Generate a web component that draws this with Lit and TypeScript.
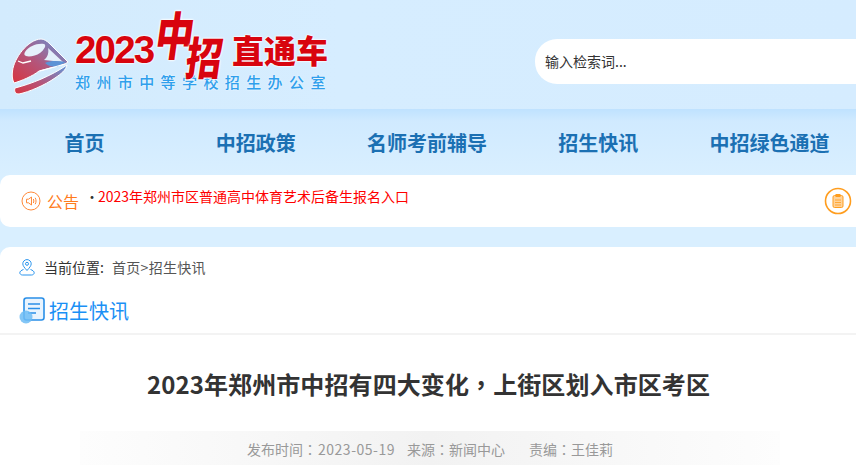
import { LitElement, html, css } from "lit";
import { customElement } from "lit/decorators.js";

const navItems = ["首页", "中招政策", "名师考前辅导", "招生快讯", "中招绿色通道"];

@customElement("app-root")
export class AppRoot extends LitElement {
  static styles = css`
    :host {
      display: block;
      width: 856px;
      height: 465px;
      overflow: hidden;
      background: #d9efff;
      font-family: "Noto Sans CJK SC", "Liberation Sans", sans-serif;
    }
    .header {
      height: 109px;
      display: flex;
      align-items: flex-start;
      justify-content: space-between;
      background: linear-gradient(90deg, #d3ebfd 0%, #d6edff 40%, #d5ecff 100%);
    }
    .logo {
      display: flex;
      padding: 8px 0 0 11px;
      gap: 6px;
    }
    .train {
      width: 58px;
      height: 62px;
      margin-top: 30px;
      flex: none;
    }
    .brand {
      display: flex;
      flex-direction: column;
    }
    .brand-top {
      display: flex;
      align-items: flex-start;
      height: 65px;
      color: #d8040e;
      text-shadow: 0 0 2px #fff, 0 0 2px #fff, 0 0 2px #fff;
    }
    .year {
      font-family: "Liberation Sans", sans-serif;
      font-weight: 700;
      font-size: 38.5px;
      letter-spacing: -1.8px;
      line-height: 40px;
      margin-top: 22px;
      width: 85px;
    }
    .zk {
      font-family: "Noto Sans CJK SC", sans-serif;
      font-weight: 900;
      line-height: 1;
      transform-origin: top center;
      flex: none;
    }
    .zhong {
      font-size: 38px;
      margin: 0 -8px 0 0;
      transform: skewX(-8deg) scaleY(1.35);
    }
    .zhao {
      font-size: 36px;
      margin: 24px 6px 0 0;
      transform: skewX(-8deg) scaleY(1.25);
    }
    .express {
      font-weight: 900;
      font-size: 32px;
      line-height: 36px;
      margin-top: 23px;
      white-space: nowrap;
    }
    .sub {
      font-size: 15px;
      font-weight: 500;
      line-height: 18px;
      letter-spacing: 6.4px;
      color: #2f9fec;
      white-space: nowrap;
      text-shadow: 0 0 2px #fff;
    }
    .search {
      width: 321px;
      height: 45px;
      margin-top: 39px;
      box-sizing: border-box;
      padding: 0 0 2px 10px;
      display: flex;
      align-items: center;
      background: #fff;
      border-radius: 22px 0 0 22px;
      font-size: 14px;
      color: #333;
    }
    .nav {
      height: 66px;
      display: grid;
      grid-template-columns: repeat(5, 1fr);
      background: linear-gradient(180deg, #bfe2ff 0%, #d0eaff 18%, #d9efff 100%);
      align-items: center;
    }
    .nav a {
      text-align: center;
      font-size: 20px;
      font-weight: 700;
      color: #1b70b3;
      line-height: 30px;
      margin: 2px 2px 0 0;
    }
    .notice {
      height: 52px;
      display: flex;
      align-items: flex-start;
      background: #fff;
      border-radius: 10px 0 0 10px;
      box-sizing: border-box;
      padding: 0 10px 0 21px;
    }
    .notice-icon {
      width: 20px;
      height: 20px;
      margin-top: 16px;
      flex: none;
    }
    .notice-label {
      font-size: 16px;
      line-height: 24px;
      margin: 14px 0 0 6px;
      color: #ff7b1c;
      width: 43px;
      flex: none;
    }
    .notice-text {
      font-size: 14px;
      line-height: 20px;
      margin-top: 11px;
      margin-left: -5px;
      color: #f00;
      white-space: nowrap;
      flex: 1;
    }
    .notice-text span {
      color: #333;
      margin-right: -1px;
    }
    .notice-btn {
      width: 28px;
      height: 28px;
      margin: 12px -6px 0 0;
      flex: none;
    }
    .card {
      margin-top: 20px;
      background: #fff;
      border-radius: 10px 0 0 0;
    }
    .crumb {
      height: 40px;
      display: flex;
      align-items: center;
      box-sizing: border-box;
      padding: 0 0 0 19px;
      font-size: 14px;
      color: #333;
    }
    .crumb svg {
      width: 16px;
      height: 17px;
      margin-right: 9px;
      flex: none;
    }
    .crumb .here {
      width: 68px;
    }
    .crumb .path {
      color: #555;
      letter-spacing: 0.3px;
    }
    .section {
      height: 48px;
      display: flex;
      align-items: flex-start;
      padding-left: 18px;
      box-sizing: border-box;
      border-bottom: 2px solid #f3f3f3;
    }
    .section svg {
      width: 28px;
      height: 28px;
      margin-top: 9px;
      margin-right: 3px;
      flex: none;
    }
    .section h2 {
      margin: 9px 0 0;
      font-weight: 400;
      font-size: 20px;
      line-height: 30px;
      color: #1a90f5;
    }
    h1 {
      margin: 0;
      padding: 31px 0 0 1px;
      text-align: center;
      font-size: 24px;
      line-height: 36px;
      font-weight: 700;
      color: #333;
      letter-spacing: 0.1px;
    }
    .tc {
      font-family: "Noto Sans CJK TC", sans-serif;
    }
    .meta {
      margin: 29px 76px 0 80px;
      height: 44px;
      box-sizing: border-box;
      padding-top: 7px;
      display: flex;
      justify-content: center;
      font-size: 14px;
      line-height: 22px;
      color: #999;
      white-space: nowrap;
      background: linear-gradient(90deg, #fdfdfd 0%, #f2f2f2 50%, #fdfdfd 100%);
    }
    .meta .date {
      letter-spacing: 0.5px;
      margin-left: 1px;
    }
    .meta .source {
      margin: 0 0 0 12px;
    }
    .meta .editor {
      margin-left: 24px;
    }
  `;

  render() {
    return html`
      <div class="header">
        <div class="logo">
          <svg class="train" viewBox="0 0 58 62">
            <defs>
              <linearGradient id="tg" x1="0" y1="1" x2="1" y2="0">
                <stop offset="0" stop-color="#d8343f" />
                <stop offset="0.45" stop-color="#b4557a" />
                <stop offset="1" stop-color="#5f9adf" />
              </linearGradient>
            </defs>
            <path d="M1.500 33C3 20 17 1.500 30 1c3 0 6 2 9 5l18 18-3 2-26 7c-6 5-18 10-25 12-2-4-2-8-1.500-12z" fill="url(#tg)" stroke="#fff" stroke-width="1" />
            <path d="M14 14c4-6 12-9 19-8 3 1 0 6-4 9-4 3-11 4-14 3-2-1-2-2-1-4z" fill="#e6f1fb" />
            <path d="M37 10l15 14-19-2c4-3 5-8 4-12z" fill="#e2effa" />
            <path d="M7 23l5 2 8-2" fill="none" stroke="#fff" stroke-width="1.300" />
            <path d="M34 25c6-3 14-2 21-1l-9 5c-4 0-9-1-12-4z" fill="#5d93d6" />
            <path d="M29 33l25-7" fill="none" stroke="#fff" stroke-width="1.200" />
            <path d="M4 50c16-4 36-12 52-23-1 5-6 9-12 13-10 7-26 14-36 16-4 0-5-3-4-6z" fill="url(#tg)" stroke="#fff" stroke-width="1" />
          </svg>
          <div class="brand">
            <div class="brand-top">
              <span class="year">2023</span>
              <span class="zk zhong">中</span>
              <span class="zk zhao">招</span>
              <span class="express">直通车</span>
            </div>
            <div class="sub">郑州市中等学校招生办公室</div>
          </div>
        </div>
        <div class="search">输入检索词...</div>
      </div>
      <div class="nav">
        ${navItems.map((n) => html`<a>${n}</a>`)}
      </div>
      <div class="notice">
        <svg class="notice-icon" viewBox="0 0 20 20" fill="none" stroke="#ff8a3a">
          <circle cx="10" cy="10" r="9" stroke-width="1" />
          <path d="M5.500 8.200h2L10.500 6v8l-3-2.200h-2z" stroke-width="1" />
          <path d="M12.300 8c.7 1.300.7 2.700 0 4M14.200 6.800c1.100 2 1.100 4.400 0 6.400" stroke-width="1" />
        </svg>
        <span class="notice-label">公告</span>
        <div class="notice-text"><span>·</span>2023年郑州市区普通高中体育艺术后备生报名入口</div>
        <svg class="notice-btn" viewBox="0 0 28 28" fill="none">
          <circle cx="14" cy="14" r="12.500" stroke="#ff9d1e" stroke-width="1.600" />
          <rect x="9" y="8.500" width="10" height="12" rx="1.500" fill="#ffd39a" stroke="#ff9d1e" />
          <rect x="11.500" y="7" width="5" height="3" fill="#ff9d1e" />
          <path d="M11 13h6M11 15.500h6M11 18h6" stroke="#ff9d1e" stroke-width="0.800" />
        </svg>
      </div>
      <div class="card">
        <div class="crumb">
          <svg viewBox="0 0 16 17" fill="none" stroke="#2a95ee" stroke-width="1">
            <path d="M8 11.500C5.500 8.700 3.800 6.800 3.800 4.800a4.200 4.200 0 0 1 8.400 0c0 2-1.700 3.900-4.200 6.700z" />
            <circle cx="8" cy="4.800" r="1.500" />
            <path d="M4.500 10.500C2.300 11.200.8 12.500.8 13.800c0 1 1 2.200 2.700 2.200h9c1.700 0 2.700-1.200 2.700-2.200 0-1.300-1.500-2.600-3.700-3.300" />
          </svg>
          <span class="here">当前位置:</span>
          <span class="path">首页&gt;招生快讯</span>
        </div>
        <div class="section">
          <svg viewBox="0 0 28 28" fill="none">
            <rect x="6" y="2" width="20" height="22" rx="2.500" fill="#e9f4fe" stroke="#2a8fe8" stroke-width="1.600" />
            <path d="M10 8h12M10 12.500h12M10 17h8" stroke="#2a8fe8" stroke-width="1.600" />
            <circle cx="8" cy="21" r="6.500" fill="#6dbcf5" opacity="0.85" />
          </svg>
          <h2>招生快讯</h2>
        </div>
        <h1>2023年郑州市中招有四大变化<span class="tc">，</span>上街区划入市区考区</h1>
        <div class="meta">
          <span>发布时间<span class="tc">：</span><span class="date">2023-05-19</span></span>
          <span class="source">来源<span class="tc">：</span>新闻中心</span>
          <span class="editor">责编<span class="tc">：</span>王佳莉</span>
        </div>
      </div>
    `;
  }
}
